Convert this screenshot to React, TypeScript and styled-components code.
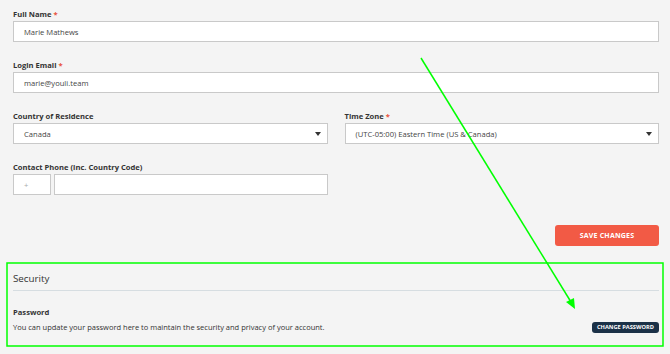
import styled, { createGlobalStyle } from "styled-components";

const GlobalStyle = createGlobalStyle`
  html, body {
    margin: 0;
    padding: 0;
    background: #f4f4f4;
  }
  body {
    font-family: "Open Sans", "Noto Sans", sans-serif;
    color: #333;
  }
`;

const Page = styled.div`
  position: relative;
  width: 670px;
  height: 354px;
  box-sizing: border-box;
  padding: 8px 11px 0 13px;
  overflow: hidden;
`;

const Form = styled.div`
  display: flex;
  flex-direction: column;
  gap: 17px;
`;

const Row = styled.div`
  display: grid;
  grid-template-columns: 1fr 1fr;
  gap: 17px;
`;

const Field = styled.div`
  display: flex;
  flex-direction: column;
`;

const Label = styled.label`
  font-size: 7.6px;
  font-weight: 700;
  line-height: 12px;
  margin-bottom: 1px;
  color: #333;
`;

const Star = styled.span`
  color: #e8503b;
  margin-left: 2px;
`;

const Input = styled.div`
  box-sizing: border-box;
  height: 21px;
  background: #fff;
  border: 1px solid #c9c9c9;
  display: flex;
  align-items: center;
  padding: 0 10px;
  font-size: 7.6px;
  color: #444;
`;

const Select = styled(Input)`
  justify-content: space-between;
  padding-right: 6px;
`;

const Caret = styled.span`
  width: 0;
  height: 0;
  border-left: 3.5px solid transparent;
  border-right: 3.5px solid transparent;
  border-top: 4px solid #333;
`;

const Placeholder = styled.span`
  color: #aaa;
`;

const PhoneRow = styled.div`
  display: flex;
  gap: 3px;
`;

const PrefixInput = styled(Input)`
  width: 38px;
  flex: none;
`;

const PhoneInput = styled(Input)`
  flex: 1;
`;

const Actions = styled.div`
  display: flex;
  justify-content: flex-end;
  margin-top: 30px;
`;

const SaveButton = styled.button`
  box-sizing: border-box;
  width: 104px;
  height: 21px;
  border: none;
  border-radius: 3px;
  background: #f25a45;
  color: #fff;
  font-family: inherit;
  font-size: 7px;
  font-weight: 700;
  letter-spacing: 0.2px;
  padding: 0;
`;

const Section = styled.section`
  margin-top: 25px;
`;

const SectionTitle = styled.h2`
  margin: 0;
  font-size: 9.8px;
  font-weight: 400;
  line-height: 16px;
  color: #333;
  padding-bottom: 3px;
  border-bottom: 1px solid #d6dde1;
`;

const SubTitle = styled.h3`
  margin: 15px 0 0;
  font-size: 7.6px;
  font-weight: 700;
  line-height: 12px;
  color: #333;
`;

const InfoRow = styled.div`
  display: flex;
  justify-content: space-between;
  align-items: center;
  margin-top: 3px;
`;

const Info = styled.p`
  margin: 0;
  font-size: 7.5px;
  line-height: 12px;
  color: #333;
`;

const DarkButton = styled.button`
  box-sizing: border-box;
  height: 11px;
  padding: 0 5px;
  border: none;
  border-radius: 3px;
  background: #1b3147;
  color: #fff;
  font-family: inherit;
  font-size: 5.7px;
  font-weight: 700;
  line-height: 11px;
`;

const Overlay = styled.svg`
  position: absolute;
  left: 0;
  top: 0;
  pointer-events: none;
`;

export default function App() {
  return (
    <>
      <GlobalStyle />
      <Page>
        <Form>
          <Field>
            <Label>
              Full Name<Star>*</Star>
            </Label>
            <Input>Marie Mathews</Input>
          </Field>
          <Field>
            <Label>
              Login Email<Star>*</Star>
            </Label>
            <Input>marie@youli.team</Input>
          </Field>
          <Row>
            <Field>
              <Label>Country of Residence</Label>
              <Select>
                Canada
                <Caret />
              </Select>
            </Field>
            <Field>
              <Label>
                Time Zone<Star>*</Star>
              </Label>
              <Select>
                (UTC-05:00) Eastern Time (US &amp; Canada)
                <Caret />
              </Select>
            </Field>
          </Row>
          <Row>
            <Field>
              <Label>Contact Phone (inc. Country Code)</Label>
              <PhoneRow>
                <PrefixInput>
                  <Placeholder>+</Placeholder>
                </PrefixInput>
                <PhoneInput />
              </PhoneRow>
            </Field>
          </Row>
        </Form>
        <Actions>
          <SaveButton>SAVE CHANGES</SaveButton>
        </Actions>
        <Section>
          <SectionTitle>Security</SectionTitle>
          <SubTitle>Password</SubTitle>
          <InfoRow>
            <Info>
              You can update your password here to maintain the security and
              privacy of your account.
            </Info>
            <DarkButton>CHANGE PASSWORD</DarkButton>
          </InfoRow>
        </Section>
        <Overlay width={670} height={354} viewBox="0 0 670 354">
          <rect x={7} y={263} width={656} height={83} fill="none" stroke="#00ff00" strokeWidth={1.5} />
          <line x1={421} y1={58} x2={571} y2={302} stroke="#00ff00" strokeWidth={1.5} />
          <polygon points="575,309 566,302 574,298" fill="#00ff00" />
        </Overlay>
      </Page>
    </>
  );
}
